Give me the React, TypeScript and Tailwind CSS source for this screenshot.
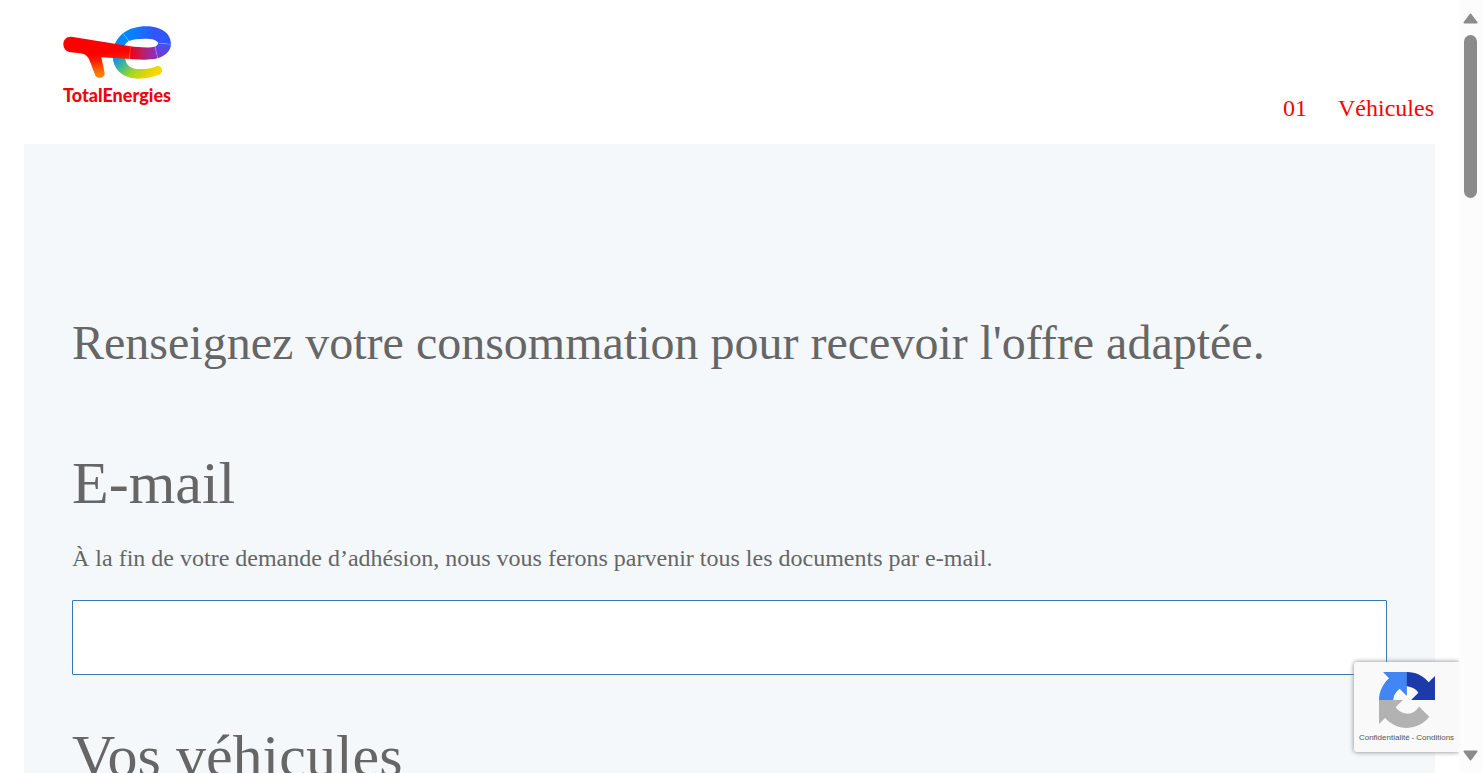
function TotalEnergiesLogo() {
  return (
    <svg viewBox="33 28 327 159" className="h-[53px] w-[109px]" aria-hidden="true">
      <defs>
        <linearGradient id="bar" gradientUnits="userSpaceOnUse" x1="135" y1="112" x2="143" y2="184">
          <stop offset="0" stopColor="#ff0000" />
          <stop offset="0.25" stopColor="#ff1a00" />
          <stop offset="0.85" stopColor="#ff8000" />
        </linearGradient>
        <linearGradient id="top" gradientUnits="userSpaceOnUse" x1="205" y1="60" x2="340" y2="60">
          <stop offset="0" stopColor="#0088ff" />
          <stop offset="0.3" stopColor="#0a80ff" />
          <stop offset="0.75" stopColor="#3055ff" />
          <stop offset="1" stopColor="#3255ff" />
        </linearGradient>
        <linearGradient id="right" gradientUnits="userSpaceOnUse" x1="330" y1="78" x2="314" y2="124">
          <stop offset="0" stopColor="#3d55f5" />
          <stop offset="1" stopColor="#8530c8" />
        </linearGradient>
        <linearGradient id="middle" gradientUnits="userSpaceOnUse" x1="234" y1="108" x2="315" y2="108">
          <stop offset="0" stopColor="#f00014" />
          <stop offset="0.45" stopColor="#c01c60" />
          <stop offset="1" stopColor="#8530c8" />
        </linearGradient>
        <linearGradient id="bottom" gradientUnits="userSpaceOnUse" x1="202" y1="72" x2="300" y2="178">
          <stop offset="0" stopColor="#0088ff" />
          <stop offset="0.25" stopColor="#1596e8" />
          <stop offset="0.45" stopColor="#48bd85" />
          <stop offset="0.68" stopColor="#a8d624" />
          <stop offset="1" stopColor="#ffd500" />
        </linearGradient>
      </defs>
      <path
        fill="url(#bottom)"
        d="M213 50C194 66 182 88 182 116C182 158 211 186 261 186C284 186 306 181 323 173C331 168 332 158 326 151C321 147 315 148 308 151C294 156 280 158 263 157C237 157 222 147 220 126L216 90C219 83 224 77 231 73Z"
      />
      <path
        fill="url(#top)"
        d="M213 50C233 35 257 29 281 29C327 29 357 49 357 83L318 79C317 70 299 66 280 66C260 66 242 68 231 73Z"
      />
      <path fill="url(#right)" d="M318 79L357 83C356 103 340 118 317 125L309 90C315 87 318 84 318 79Z" />
      <path fill="url(#middle)" d="M234 89C262 92 293 94 309 90L317 125C293 131 261 129 233 127Z" />
      <path
        fill="url(#bar)"
        d="M58 60C43 59 34 70 34 82C34 96 43 106 56 107L84 110C99 111 108 119 113 132L129 174C135 189 160 185 158 168L148 122L233 127L235 89Z"
      />
      <path
        d="M213 51L231 73M318 79L356 83M309 91L317 124M235 89L233 127"
        stroke="#ffffff"
        strokeOpacity="0.3"
        strokeWidth="2"
        fill="none"
      />
    </svg>
  );
}

function RecaptchaLogo() {
  return (
    <svg viewBox="0 0 64 64" className="h-14 w-14" aria-hidden="true">
      <path
        fill="#1c3aa9"
        d="M64 31.955l-.033-1.37V4.687l-7.16 7.16C50.948 4.674 42.033.093 32.05.093c-10.4 0-19.63 4.96-25.457 12.64l11.736 11.86a15.55 15.55 0 0 1 4.754-5.334c2.05-1.6 4.952-2.906 8.968-2.906.485 0 .86.057 1.135.163 4.976.393 9.288 3.14 11.828 7.124l-8.307 8.307L64 31.953"
      />
      <path
        fill="#4285f4"
        d="M31.862.094l-1.37.033H4.594l7.16 7.16C4.58 13.147 0 22.06 0 32.046c0 10.392 4.96 19.624 12.64 25.458L24.5 45.768a15.55 15.55 0 0 1-5.334-4.754c-1.6-2.05-2.906-4.952-2.906-8.968 0-.485.057-.86.163-1.135.393-4.976 3.14-9.288 7.124-11.828l8.307 8.307L31.86.095"
      />
      <path
        fill="#b2b2b2"
        d="M.001 32.045l.033 1.37v25.898l7.16-7.16c5.86 7.173 14.774 11.754 24.76 11.754 10.392 0 19.624-4.96 25.458-12.64l-11.736-11.86a15.55 15.55 0 0 1-4.754 5.334c-2.05 1.6-4.952 2.906-8.968 2.906-.485 0-.86-.057-1.135-.163-4.976-.393-9.288-3.14-11.828-7.124l8.307-8.307c-10.522.04-22.4.066-27.295-.005"
      />
    </svg>
  );
}

function ScrollRail() {
  return (
    <div className="flex w-[23px] shrink-0 flex-col items-center justify-between bg-[#fcfcfc] pt-[13px] pb-3" aria-hidden="true">
      <div className="flex flex-col items-center gap-[11px]">
        <svg viewBox="0 0 15 11" className="h-[11px] w-[15px]">
          <path d="M7.5 1.5L13.5 9.5H1.5Z" fill="#8b8b8b" stroke="#8b8b8b" strokeWidth="2" strokeLinejoin="round" />
        </svg>
        <div className="h-[163px] w-[13px] rounded-full bg-[#8b8b8b]" />
      </div>
      <svg viewBox="0 0 15 11" className="h-[11px] w-[15px]">
        <path d="M7.5 9.5L13.5 1.5H1.5Z" fill="#8b8b8b" stroke="#8b8b8b" strokeWidth="2" strokeLinejoin="round" />
      </svg>
    </div>
  );
}

export default function App() {
  return (
    <div className="flex h-screen overflow-hidden bg-white font-['Liberation_Serif',serif] text-[#666666]">
      <div className="relative min-w-0 flex-1 overflow-hidden px-6">
        <header className="flex h-36 items-end justify-between">
          <a href="#accueil" className="flex flex-col self-start pt-[26px] pl-[39px]">
            <TotalEnergiesLogo />
            <span className="mt-[6px] font-['Lato',sans-serif] text-[18px] leading-5 font-black text-[#f5000f]">
              TotalEnergies
            </span>
          </a>
          <nav className="pr-px pb-[22px]">
            <a href="#vehicules" className="flex gap-[31px] text-2xl leading-7 text-[#ff0000]">
              <span>01</span>
              <span>Véhicules</span>
            </a>
          </nav>
        </header>

        <main className="bg-[#f4f8fb] px-12 pt-[171px] pb-24">
          <h1 className="text-5xl leading-[56px]">
            Renseignez votre consommation pour recevoir l'offre adaptée.
          </h1>
          <form>
            <h2 className="mt-[78px] text-[60px] leading-[68px]">
              <label htmlFor="email">E-mail</label>
            </h2>
            <p id="email-hint" className="mt-[25px] text-2xl leading-8">
              À la fin de votre demande d’adhésion, nous vous ferons parvenir tous les documents par e-mail.
            </p>
            <input
              id="email"
              type="email"
              aria-describedby="email-hint"
              className="mt-[26px] block h-[75px] w-full rounded-[1px] border border-[#337ab7] bg-white px-6 text-2xl outline-none"
            />
            <h2 className="mt-[47px] text-[60px] leading-[68px]">Vos véhicules</h2>
          </form>
        </main>

        <aside className="absolute right-0 bottom-[21px] flex h-[90px] w-[105px] flex-col items-center rounded-l-[3px] bg-[#f9f9f9] pt-[10px] shadow-[0_0_5px_gray]">
          <RecaptchaLogo />
          <div className="mt-1 flex gap-[2px] font-['Liberation_Sans',sans-serif] text-[8px] leading-3 text-[#555555]">
            <a href="#confidentialite">Confidentialité</a>
            <span>-</span>
            <a href="#conditions">Conditions</a>
          </div>
        </aside>
      </div>
      <ScrollRail />
    </div>
  );
}
